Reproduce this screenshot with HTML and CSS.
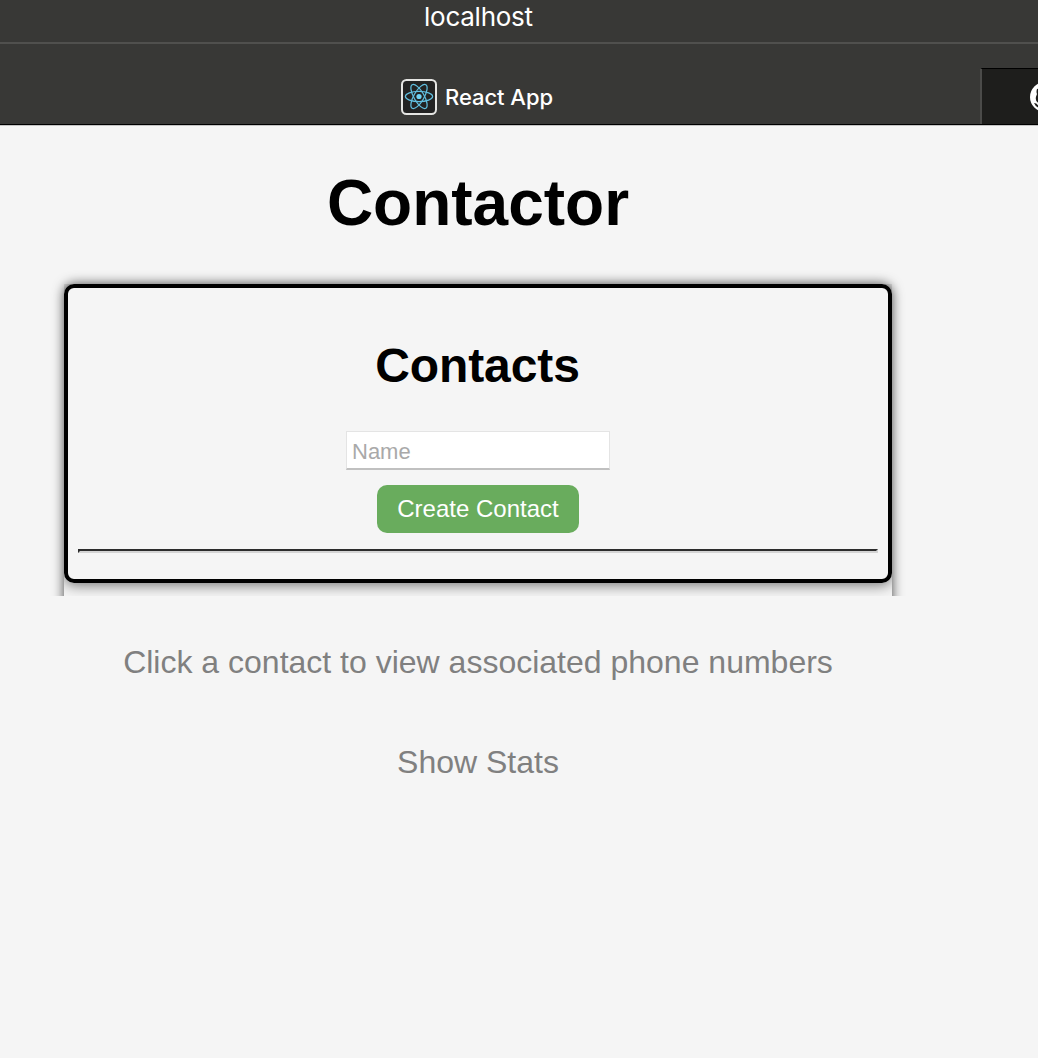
FILE: index.html
```html
<!DOCTYPE html>
<html lang="en">
<head>
<meta charset="utf-8">
<title>React App</title>
<link rel="stylesheet" href="styles.css">
</head>
<body>
<header class="browser">
  <div class="address"><span>localhost</span></div>
  <div class="tabs">
    <div class="tab-active">
      <svg class="react" viewBox="0 0 36 36" width="36" height="36">
        <rect x="1" y="1" width="34" height="34" rx="4.5" fill="#222" stroke="#e4e4e2" stroke-width="2"/>
        <g fill="none" stroke="#61bfe0" stroke-width="1.25">
          <ellipse cx="18" cy="17.5" rx="13.6" ry="5.1"/>
          <ellipse cx="18" cy="17.5" rx="13.6" ry="5.1" transform="rotate(60 18 17.5)"/>
          <ellipse cx="18" cy="17.5" rx="13.6" ry="5.1" transform="rotate(120 18 17.5)"/>
        </g>
        <circle cx="18" cy="17.5" r="2.6" fill="#70d3f5"/>
      </svg>
      <span>React App</span>
    </div>
    <div class="tab-next">
      <svg viewBox="0 0 30 30" width="30" height="30">
        <circle cx="15" cy="15" r="15" fill="#fff"/>
        <path d="M7 7Q8 6 12 8Q15 7 18 8Q22 6 23 7Q24 10 23 12Q27 21 18 22Q20 24 19 29H11V26Q6 26 4 21Q7 21 8.500 24L11 24L12 22Q3 21 7 12Q6 10 7 7Z" fill="#1e1e1c"/>
      </svg>
    </div>
  </div>
</header>
<main class="app">
  <h1>Contactor</h1>
  <section class="panel">
    <div class="card">
      <h2>Contacts</h2>
      <input class="name" type="text" placeholder="Name">
      <button class="create">Create Contact</button>
      <hr>
    </div>
  </section>
  <p class="hint">Click a contact to view associated phone numbers</p>
  <p class="stats">Show Stats</p>
</main>
</body>
</html>
```
FILE: styles.css
```css
* { box-sizing: border-box; }
body {
  margin: 0;
  height: 1058px;
  overflow: hidden;
  background: #f5f5f5;
  font-family: "Liberation Sans", Arial, sans-serif;
}
.browser {
  height: 126px;
  background: #383836;
  color: #fff;
  font-family: Inter, sans-serif;
  border-bottom: 1px solid #c4c4c4;
}
.address {
  height: 44px;
  border-bottom: 2px solid #50504e;
  padding-left: 424px;
  font-size: 26px;
  line-height: 34px;
  letter-spacing: -0.25px;
}
.tabs {
  display: flex;
  align-items: flex-end;
  height: 81px;
  border-bottom: 1px solid #000;
}
.tab-active {
  display: flex;
  align-items: center;
  gap: 8px;
  width: 980px;
  height: 56px;
  flex: none;
  padding: 2px 0 0 401px;
  font-size: 22px;
  font-weight: 500;
  letter-spacing: -0.05px;
}
.react { display: block; }
.tab-next {
  flex: 1;
  height: 56px;
  overflow: hidden;
  background: #1e1e1c;
  border-top: 1px solid #000;
  border-left: 2px solid #4b4b49;
  padding: 13px 0 0 48px;
}
.tab-next svg { display: block; }
.app {
  display: flex;
  flex-direction: column;
  align-items: center;
  width: 956px;
  text-align: center;
}
h1 {
  margin: 40px 0 0;
  font-size: 64px;
  line-height: 74px;
}
.panel {
  width: 828px;
  height: 352px;
  margin: 44px 0 -40px;
  border-radius: 10px;
  box-shadow: 0 0 12px rgba(0, 0, 0, .72);
  clip-path: inset(-30px -30px 40px -30px);
}
.card {
  display: flex;
  flex-direction: column;
  align-items: center;
  height: 299px;
  border: 4px solid #000;
  border-radius: 10px;
  box-shadow: 0 2px 14px rgba(0, 0, 0, .55);
  clip-path: inset(0 0 -30px 0);
}
h2 {
  margin: 50px 0 38px;
  font-size: 48px;
  line-height: 55px;
  letter-spacing: -0.1px;
  padding-right: 1px;
}
.name {
  width: 264px;
  height: 39px;
  padding: 3px 5px 0;
  border: 1px solid #e4e4e4;
  border-bottom: 2px solid #c0c0c0;
  background: #fff;
  font: 22px "Liberation Sans", Arial, sans-serif;
}
.name::placeholder { color: #a9a9a9; opacity: 1; }
.create {
  width: 202px;
  height: 48px;
  margin: 15px 0 16px;
  padding: 0;
  border: 0;
  border-radius: 10px;
  background: #69ac5d;
  color: #fff;
  font: 24px "Liberation Sans", Arial, sans-serif;
}
hr {
  width: 800px;
  height: 4px;
  margin: 0;
  border: 2px solid;
  border-color: #2c2c2c #d4d4d4 #d4d4d4 #2c2c2c;
}
.hint, .stats {
  margin: 0;
  color: #808080;
  font-size: 32px;
  line-height: 36px;
}
.hint { margin-top: 48px; }
.stats { margin-top: 64px; }
```
